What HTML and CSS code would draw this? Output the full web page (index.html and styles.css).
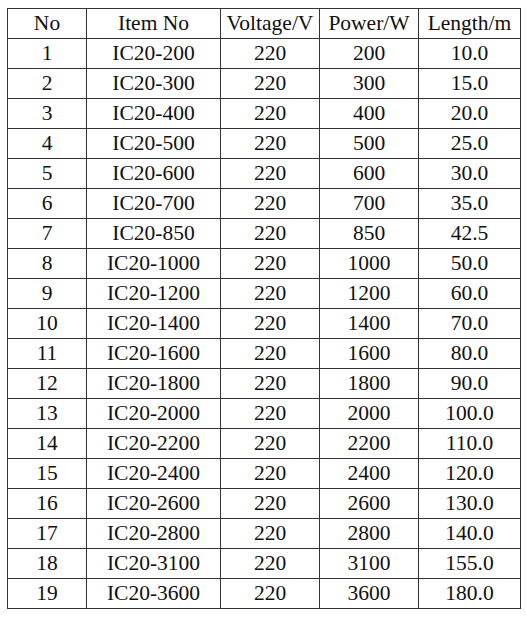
FILE: index.html
```html
<!DOCTYPE html>
<html>
<head>
<meta charset="utf-8">
<link rel="stylesheet" href="styles.css">
</head>
<body>
<table class="spec">
<colgroup>
<col class="c1"><col class="c2"><col class="c3"><col class="c4"><col class="c5">
</colgroup>
<thead>
<tr><th>No</th><th>Item No</th><th>Voltage/V</th><th>Power/W</th><th>Length/m</th></tr>
</thead>
<tbody>
<tr><td>1</td><td>IC20-200</td><td>220</td><td>200</td><td>10.0</td></tr>
<tr><td>2</td><td>IC20-300</td><td>220</td><td>300</td><td>15.0</td></tr>
<tr><td>3</td><td>IC20-400</td><td>220</td><td>400</td><td>20.0</td></tr>
<tr><td>4</td><td>IC20-500</td><td>220</td><td>500</td><td>25.0</td></tr>
<tr><td>5</td><td>IC20-600</td><td>220</td><td>600</td><td>30.0</td></tr>
<tr><td>6</td><td>IC20-700</td><td>220</td><td>700</td><td>35.0</td></tr>
<tr><td>7</td><td>IC20-850</td><td>220</td><td>850</td><td>42.5</td></tr>
<tr><td>8</td><td>IC20-1000</td><td>220</td><td>1000</td><td>50.0</td></tr>
<tr><td>9</td><td>IC20-1200</td><td>220</td><td>1200</td><td>60.0</td></tr>
<tr><td>10</td><td>IC20-1400</td><td>220</td><td>1400</td><td>70.0</td></tr>
<tr><td>11</td><td>IC20-1600</td><td>220</td><td>1600</td><td>80.0</td></tr>
<tr><td>12</td><td>IC20-1800</td><td>220</td><td>1800</td><td>90.0</td></tr>
<tr><td>13</td><td>IC20-2000</td><td>220</td><td>2000</td><td>100.0</td></tr>
<tr><td>14</td><td>IC20-2200</td><td>220</td><td>2200</td><td>110.0</td></tr>
<tr><td>15</td><td>IC20-2400</td><td>220</td><td>2400</td><td>120.0</td></tr>
<tr><td>16</td><td>IC20-2600</td><td>220</td><td>2600</td><td>130.0</td></tr>
<tr><td>17</td><td>IC20-2800</td><td>220</td><td>2800</td><td>140.0</td></tr>
<tr><td>18</td><td>IC20-3100</td><td>220</td><td>3100</td><td>155.0</td></tr>
<tr><td>19</td><td>IC20-3600</td><td>220</td><td>3600</td><td>180.0</td></tr>
</tbody>
</table>
</body>
</html>
```
FILE: styles.css
```css
html, body {
  margin: 0;
  padding: 0;
  background: #ffffff;
}
body {
  padding: 8px 0 0 7px;
  font-family: "Liberation Serif", "Times New Roman", serif;
  font-size: 21.5px;
  color: #111111;
}
.spec {
  border-collapse: collapse;
  table-layout: fixed;
  width: 513px;
}
.c1 { width: 79px; }
.c2 { width: 134px; }
.c3 { width: 99px; }
.c4 { width: 99px; }
.c5 { width: 102px; }
.spec th, .spec td {
  border: 1px solid #333333;
  height: 29px;
  padding: 0;
  text-align: center;
  vertical-align: middle;
  font-weight: normal;
  line-height: 29px;
  white-space: nowrap;
}
```
